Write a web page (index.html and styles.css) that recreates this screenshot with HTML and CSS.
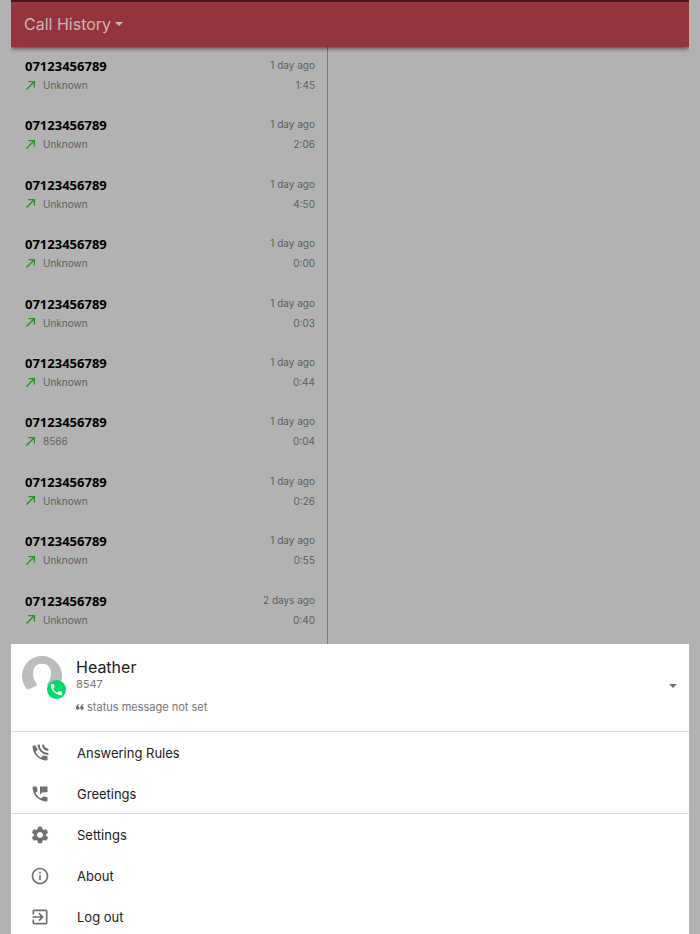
FILE: index.html
```html
<!DOCTYPE html>
<html lang="en">
<head>
<meta charset="utf-8">
<meta name="viewport" content="width=device-width, initial-scale=1">
<title>Call History</title>
<link rel="stylesheet" href="styles.css">
</head>
<body>
<svg width="0" height="0" class="defs" aria-hidden="true">
  <symbol id="outgoing" viewBox="4 5 15 15"><path d="M8 5v2.200h7.200L4 18.400 5.600 20 16.800 8.800V16H19V5z"/></symbol>
</svg>
<div class="app">
  <header class="bar">
    <button class="title" type="button">Call History <span class="caret"></span></button>
  </header>
  <main class="content">
    <ul class="calls" id="calls"></ul>
    <section class="detail"></section>
  </main>
  <section class="sheet">
    <div class="profile">
      <div class="avatar">
        <svg class="person" viewBox="0 0 40 40" aria-hidden="true"><path fill="#bcbcbc" d="M5.500 33.800A20 20 0 1 1 34.500 33.800L26 30Q24.500 29 25.500 27.500C28 25 29 21 29 17C29 11 25 7.800 20 7.800S11 11 11 17C11 21 12 25 14.500 27.500Q15.500 29 14 30z"/></svg>
        <span class="status"><svg viewBox="0 0 24 24" aria-hidden="true"><path fill="#fff" d="M6.620 10.790c1.440 2.830 3.760 5.140 6.590 6.590l2.200-2.200c.27-.27.67-.36 1.020-.24 1.120.37 2.330.57 3.570.57.550 0 1 .45 1 1V20c0 .55-.45 1-1 1-9.390 0-17-7.610-17-17 0-.55.45-1 1-1h3.500c.55 0 1 .45 1 1 0 1.250.2 2.450.57 3.570.11.350.03.740-.25 1.020z"/></svg></span>
      </div>
      <div class="who">
        <h2>Heather</h2>
        <p class="ext">8547</p>
        <p class="message"><svg viewBox="0 0 16 12" aria-hidden="true"><path d="M6 0C2 1 0 4 0 8a3.500 3.500 0 1 0 3.500-3.500C4 3 5 2 6.500 1.500zM14.500 0c-4 1-6 4-6 8A3.500 3.500 0 1 0 12 4.500c.5-1.500 1.500-2.500 3-3z"/></svg>status message not set</p>
      </div>
      <button class="more" type="button" aria-label="Change status"><span class="caret"></span></button>
    </div>
    <nav class="group">
      <a href="#rules"><svg viewBox="0 0 24 24" aria-hidden="true"><path d="M20 15.500c-1.250 0-2.450-.2-3.570-.57-.35-.11-.74-.03-1.020.24l-2.200 2.200c-2.830-1.440-5.150-3.750-6.590-6.590l2.200-2.200c.28-.28.36-.67.25-1.020C8.200 6.450 7.500 5.250 7.500 4c0-.55-.45-1-1-1H4c-.55 0-1 .45-1 1 0 9.390 7.610 17 17 17 .55 0 1-.45 1-1v-3.500c0-.55-.45-1-1-1z"/><path class="wave" d="M10.200 2C10.800 8.500 15.500 13 22 13.400M15.500 2C15.800 5.600 18.400 8 22 8.300"/></svg>Answering Rules</a>
      <a href="#greetings"><svg viewBox="0 0 24 24" aria-hidden="true"><path d="M20 15.500c-1.250 0-2.450-.2-3.570-.57-.35-.11-.74-.03-1.020.24l-2.200 2.200c-2.830-1.440-5.150-3.750-6.590-6.580l2.200-2.210c.28-.27.36-.66.25-1.010C8.700 6.450 8.500 5.250 8.500 4c0-.55-.45-1-1-1H4c-.55 0-1 .45-1 1 0 9.390 7.610 17 17 17 .55 0 1-.45 1-1v-3.500c0-.55-.45-1-1-1zM12 3v10l3-3h6V3h-9z"/></svg>Greetings</a>
    </nav>
    <nav class="group">
      <a href="#settings"><svg viewBox="0 0 24 24" aria-hidden="true"><path d="M19.430 12.980c.04-.32.07-.64.07-.98s-.03-.66-.07-.98l2.110-1.650c.19-.15.24-.42.12-.64l-2-3.460c-.12-.22-.39-.3-.61-.22l-2.490 1c-.52-.4-1.080-.73-1.690-.98l-.38-2.650C14.460 2.180 14.250 2 14 2h-4c-.25 0-.46.18-.49.42l-.38 2.650c-.61.25-1.170.59-1.690.98l-2.490-1c-.23-.09-.49 0-.61.22l-2 3.460c-.13.22-.07.49.12.64l2.110 1.650c-.04.32-.07.65-.07.98s.03.660.07.980l-2.110 1.650c-.19.15-.24.42-.12.640l2 3.460c.12.22.39.3.61.22l2.490-1c.52.4 1.080.73 1.690.98l.38 2.650c.03.24.24.42.49.42h4c.25 0 .46-.18.49-.42l.38-2.650c.61-.25 1.170-.59 1.690-.98l2.490 1c.23.09.49 0 .61-.22l2-3.460c.12-.22.07-.49-.12-.64l-2.110-1.650zM12 15.500c-1.930 0-3.500-1.570-3.500-3.500s1.570-3.500 3.500-3.500 3.500 1.570 3.500 3.500-1.570 3.500-3.500 3.500z"/></svg>Settings</a>
      <a href="#about"><svg viewBox="0 0 24 24" aria-hidden="true"><path d="M11 17h2v-6h-2v6zm1-15C6.480 2 2 6.480 2 12s4.480 10 10 10 10-4.480 10-10S17.520 2 12 2zm0 18c-4.410 0-8-3.590-8-8s3.590-8 8-8 8 3.590 8 8-3.590 8-8 8zM11 9h2V7h-2v2z"/></svg>About</a>
      <a href="#logout"><svg viewBox="0 0 24 24" aria-hidden="true"><path d="M10.090 15.590L11.500 17l5-5-5-5-1.410 1.410L12.670 11H3v2h9.670l-2.580 2.590zM19 3H5c-1.110 0-2 .9-2 2v4h2V5h14v14H5v-4H3v4c0 1.100.89 2 2 2h14c1.100 0 2-.9 2-2V5c0-1.100-.9-2-2-2z"/></svg>Log out</a>
    </nav>
  </section>
</div>
<script src="calls.js"></script>
</body>
</html>
```

FILE: styles.css
```css
* { box-sizing: border-box; }
body {
  margin: 0;
  background: #b2b2b2;
  font-family: Inter, "Liberation Sans", sans-serif;
  color: #212121;
}
h2, p, ul { margin: 0; padding: 0; }
button { border: 0; background: none; padding: 0; font: inherit; color: inherit; }
.defs { position: absolute; }
.app {
  display: flex;
  flex-direction: column;
  height: 100vh;
  margin: 0 11px;
  overflow: hidden;
}
.bar {
  flex: none;
  display: flex;
  align-items: center;
  height: 47px;
  padding: 0 13px 2px;
  border-top: 2px solid #431a20;
  background: #94343e;
  box-shadow: 0 1px 5px rgba(0, 0, 0, .7);
  z-index: 1;
}
.title {
  display: flex;
  align-items: center;
  gap: 4px;
  font-size: 16px;
  line-height: 20px;
  color: #cbb4b6;
}
.caret {
  border: 4px solid transparent;
  border-top-color: currentColor;
  border-bottom: 0;
}
.content {
  flex: 1;
  display: grid;
  grid-template-columns: 317px 1fr;
  min-height: 0;
}
.calls {
  display: grid;
  grid-auto-rows: 1fr;
  padding-bottom: 3px;
  border-right: 1px solid #7d7d7d;
  list-style: none;
}
.call {
  display: grid;
  grid-template-columns: 1fr auto;
  grid-template-rows: 20px 18px;
  padding: 9px 12px 0 14px;
  font-size: 10px;
  line-height: 18px;
  color: #5f5f5f;
}
.number {
  font: bold 13px/20px "Noto Sans", sans-serif;
  color: #000;
}
.when, .length { text-align: right; }
.name { display: flex; align-items: center; gap: 8px; padding-left: 1px; }
.name svg { width: 9px; height: 9px; fill: #249326; }
.sheet {
  flex: none;
  margin-bottom: -3px;
  background: #fff;
}
.profile {
  display: flex;
  height: 88px;
  padding: 12px 12px 0 11px;
  border-bottom: 1px solid #dedede;
}
.avatar { position: relative; width: 40px; height: 40px; }
.person { display: block; width: 40px; height: 40px; }
.status {
  position: absolute;
  left: 25px;
  top: 24px;
  display: flex;
  width: 19px;
  height: 19px;
  padding: 2px;
  border-radius: 50%;
  background: #00da68;
}
.who { flex: 1; padding-left: 14px; color: #757575; }
.who h2 { font-size: 16px; font-weight: 400; line-height: 22px; color: #212121; }
.ext { font-size: 11px; line-height: 12px; }
.message {
  display: flex;
  align-items: center;
  gap: 3px;
  margin-top: 9px;
  font-size: 11px;
  line-height: 16px;
}
.message svg { width: 8px; height: 6px; fill: #666; }
.more { align-self: flex-start; padding-top: 28px; color: #757575; line-height: 0; }
.more .caret { display: block; }
.group + .group { box-shadow: 0 -1px #dedede; }
.group a {
  display: flex;
  align-items: center;
  gap: 27px;
  height: 41px;
  padding: 0 19px;
  font-size: 13px;
  line-height: 20px;
  color: #212121;
  text-decoration: none;
}
.group svg { width: 20px; height: 20px; fill: #707070; }
.group .wave { fill: none; stroke: #707070; stroke-width: 2.600; }
```

FILE: calls.js
```js
const calls = [
  ["Unknown", "1 day ago", "1:45"],
  ["Unknown", "1 day ago", "2:06"],
  ["Unknown", "1 day ago", "4:50"],
  ["Unknown", "1 day ago", "0:00"],
  ["Unknown", "1 day ago", "0:03"],
  ["Unknown", "1 day ago", "0:44"],
  ["8566", "1 day ago", "0:04"],
  ["Unknown", "1 day ago", "0:26"],
  ["Unknown", "1 day ago", "0:55"],
  ["Unknown", "2 days ago", "0:40"]
];
document.getElementById("calls").innerHTML = calls.map(([name, when, length]) => `
  <li class="call">
    <span class="number">07123456789</span>
    <span class="when">${when}</span>
    <span class="name"><svg viewBox="0 0 15 15" aria-hidden="true"><use href="#outgoing" width="15" height="15"/></svg>${name}</span>
    <span class="length">${length}</span>
  </li>`).join("");
```
